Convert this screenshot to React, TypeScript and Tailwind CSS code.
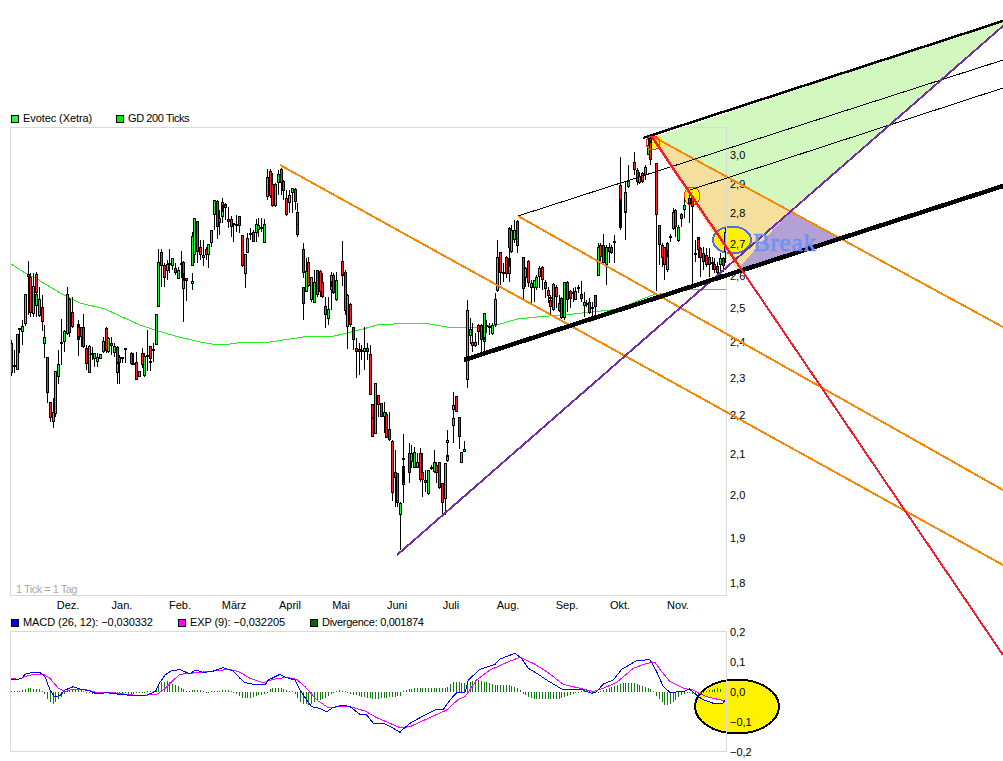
const GREEN = "#22ee33";
const RED = "#ff2222";

type Row = [number, number, number, number?, number?, number?];

// candle rows: x, body top, body bottom, wick top, wick bottom, green (1) or red (0)
// measured on 3x crops, each block has its own crop origin
const blockA: Row[] = [
  [34,310,400,300,407,0],[41,375,380,330,400,0],[49,283,390,283,390,1],[58,263,268,263,340,0],[67,258,275,240,315,1],[73,163,253,163,258,1],
  [82,102,112,63,225,0],[89,110,220,100,232,0],[97,138,222,100,232,1],[106,103,160,95,200,0],[112,162,197,160,230,1],[120,178,227,140,230,1],
  [127,202,247,165,272,0],[136,290,313,255,355,1],[142,352,458,352,490,0],[151,485,535,485,545,0],[159,515,547,475,563,1],[166,392,523,392,530,1],
  [175,373,412,330,432,1],[182,305,310,237,375,1],[190,272,305,270,335,1],[199,163,283,140,285,1],[205,178,278,175,290,0],[213,215,232,198,265,1],
  [220,215,260,170,265,0],[229,253,300,253,347,0],[237,262,292,240,318,0],[245,262,292,262,320,0],[253,262,322,222,325,0],[261,325,373,315,390,0],
  [269,317,400,315,400,1],[276,340,345,320,360,0],[283,340,358,340,380,1],[292,350,367,340,380,1],[298,343,358,343,358,1],[306,303,337,290,340,1],
  [313,265,333,262,340,0],[322,295,335,290,340,1],[331,310,317,290,345,0],[338,317,340,310,350,1],[346,320,387,318,390,0],[353,368,398,365,433,1],
  [361,350,370,345,433,0],[368,350,358,350,370,1],[377,325,331,325,370,0],[390,338,372,335,375,0],[398,370,373,340,375,0],[406,367,421,335,421,0],
  [414,393,412,393,412,1],[423,340,375,323,385,0],[431,347,409,340,412,1],[439,345,347,270,392,0],[447,362,365,345,392,0],[454,317,358,317,362,0],
  [461,328,333,310,365,0],[469,223,316,223,316,1],
];
const blockB: Row[] = [
  [477,487,622,448,622,1],[483,457,498,448,560,0],[492,495,535,490,562,0],[499,492,512,480,540,1],[508,490,495,448,520,1],[516,475,498,475,510,1],
  [523,505,520,490,525,0],[531,510,538,500,538,1],[539,488,490,453,535,1],[547,485,558,483,667,0],[554,540,568,520,598,1],[562,535,542,535,602,0],
  [571,543,553,520,570,1],[578,408,497,395,497,1],[586,355,465,355,490,1],[593,363,455,363,490,0],[601,440,465,420,480,0],[609,465,475,420,497,1],
  [616,447,465,440,480,0],[625,432,465,432,505,1],[632,390,428,390,440,1],[640,300,345,300,390,1],[647,303,380,300,418,0],[655,353,370,330,405,0],
  [664,315,350,295,370,1],[670,305,318,295,335,0],[679,312,325,310,360,0],[686,358,365,320,385,0],[695,358,380,348,412,0],[703,370,376,370,425,0],
  [711,372,376,345,395,0],[718,347,377,347,400,0],[725,405,497,405,500,0],[733,462,523,462,563,1],[742,415,458,400,458,1],[748,400,405,385,420,0],
  [757,395,425,390,425,0],[763,373,400,358,425,1],[772,375,390,355,410,1],[780,380,384,355,395,0],[788,390,406,375,410,0],[796,372,430,357,430,1],
  [802,230,292,208,300,1],[811,212,288,208,295,0],[818,252,318,220,320,0],[826,252,318,250,320,1],[835,223,250,210,285,1],[841,208,250,205,285,0],
  [850,242,272,240,300,0],[857,295,344,270,347,0],[864,285,310,270,340,1],[872,265,280,265,340,1],[880,267,305,265,330,0],[889,337,388,310,390,0],
  [896,373,406,373,410,0],[905,447,520,430,535,0],[912,560,612,560,660,0],[920,512,575,475,575,1],[928,485,558,470,560,0],[936,530,600,530,605,1],
  [944,545,610,510,610,1],[951,510,585,510,590,0],[960,513,575,510,590,0],[966,545,590,520,595,0],[974,618,645,590,685,0],[982,628,658,592,675,1],[988,530,570,515,630,1],
];
const blockC: Row[] = [
  [3,165,185,155,200,1],[13,165,218,160,222,0],[22,180,240,155,242,1],[32,128,168,63,197,0],[38,123,165,115,170,0],[46,155,272,150,285,0],
  [53,225,322,222,388,1],[62,253,315,250,320,0],[68,322,360,322,390,0],[76,385,397,355,475,0],[85,388,397,370,465,0],[92,390,396,375,420,1],
  [100,385,397,322,450,1],[107,385,395,370,420,0],[115,403,525,375,525,0],[125,553,595,553,615,0],[130,595,650,590,650,0],[139,488,642,488,642,1],
  [145,525,555,525,590,0],[155,550,590,548,592,0],[161,575,590,545,640,1],[169,583,655,575,655,0],[177,628,660,575,662,0],[184,662,818,660,842,0],
  [193,757,775,690,860,0],[200,760,850,758,862,0],[208,848,885,845,990,1],[217,738,795,718,850,1],[223,715,720,642,790,0],[232,702,706,670,745,1],
  [237,700,760,680,790,0],[247,700,727,675,745,1],[255,695,745,680,745,1],[263,725,745,700,745,1],[270,700,780,685,785,0],[278,755,780,700,830,0],
  [286,780,790,750,815,0],[292,750,822,750,825,1],[302,742,746,735,750,1],[311,725,757,690,760,1],[317,735,760,725,790,0],[326,725,805,725,808,0],
  [332,790,848,790,885,0],[340,730,838,730,885,1],[349,706,723,680,725,1],[353,660,670,630,710,1],[365,595,617,565,670,1],[371,555,570,515,575,1],
  [380,527,575,527,575,0],[386,592,652,592,688,0],[394,697,730,697,730,1],[403,688,696,662,696,1],[409,270,480,240,503,1],[419,328,347,295,372,1],
  [425,365,378,310,395,0],[433,365,378,340,380,1],[443,315,337,312,375,0],[449,315,360,312,395,0],[457,345,365,345,395,1],[464,280,355,278,360,1],
  [472,315,318,300,340,1],[480,318,322,310,345,0],[488,315,342,310,345,1],[497,238,315,220,320,1],[503,110,212,60,215,1],[511,95,160,95,195,0],
  [519,155,162,130,185,1],[527,110,162,108,175,0],[535,115,162,70,185,1],[540,25,85,20,140,0],[548,30,97,15,100,1],[556,30,60,0,70,1],
  [565,3,78,0,100,0],[575,110,207,110,240,0],[583,145,175,140,200,1],[595,122,190,120,200,0],[605,190,205,180,250,1],[612,180,205,180,247,1],
  [620,170,203,165,210,1],[630,145,170,138,205,1],[634,140,180,138,210,0],[643,185,207,180,235,0],[649,210,228,200,250,0],[658,232,238,225,260,0],
  [665,240,260,235,285,0],[673,193,270,190,272,1],[680,200,232,195,265,0],[688,250,272,225,275,0],[695,235,295,232,298,0],[703,187,295,187,300,1],
  [712,185,240,183,275,0],[720,212,238,210,265,0],[726,215,220,205,245,1],[737,212,240,200,240,1],[744,200,206,195,220,0],[751,222,237,183,245,0],
  [760,245,258,215,290,1],[766,250,255,240,260,0],[778,245,280,235,282,0],[790,260,264,245,290,0],[796,225,262,225,290,0],
];
const blockD: Row[] = [
  [25,350,437,340,437,1],[33,345,380,340,400,0],[40,345,400,312,405,0],[50,350,405,345,465,1],[58,350,365,340,400,0],[65,350,370,345,372,0],
  [73,333,340,315,400,1],[88,168,295,80,295,1],[93,165,210,160,300,0],[103,190,250,175,330,1],[109,185,245,155,330,1],[118,152,172,105,175,1],
  [128,95,120,65,135,0],[143,120,155,115,165,0],[148,138,160,125,162,1],[158,130,155,125,160,0],[166,110,135,105,150,1],[173,45,75,25,75,1],
  [178,25,40,20,50,0],[185,35,90,30,105,0],[195,100,255,100,482,0],[206,285,345,285,405,0],[212,345,385,340,410,0],[220,350,405,350,450,0],
  [228,350,420,345,425,1],[235,338,362,335,380,0],[241,318,320,312,335,1],[250,245,298,235,300,1],[258,240,290,238,320,0],[266,292,332,285,335,1],
  [273,253,268,250,290,0],[281,225,240,205,265,1],[296,203,222,195,280,0],[303,204,230,204,465,0],[313,370,374,330,395,1],[319,322,350,320,380,1],
  [327,328,360,325,385,0],[335,355,385,350,440,0],[343,370,395,350,420,0],[350,375,405,355,410,0],[358,380,405,355,440,0],[365,395,402,380,420,1],
  [372,402,420,385,430,0],[380,408,428,395,440,0],[390,385,405,370,435,1],[398,385,408,380,425,0],[405,305,365,295,400,1],
];

// one candle per trading day, 2.78px apart
const snap = (x: number) => Math.round(11 + Math.round((x - 11) / 2.78) * 2.78);

const place = (rows: Row[], ox: number, oy: number) =>
  rows.map(([x, t, b, wt = t, wb = b, g = 1]) => ({
    x: snap(ox + x / 3),
    t: Math.round(oy + t / 3),
    b: Math.round(oy + b / 3),
    wt: Math.round(oy + wt / 3),
    wb: Math.round(oy + wb / 3),
    fill: g ? GREEN : RED,
  }));

const candles = [
  ...place(blockA, 0, 240),
  ...place(blockB, 0, 100),
  ...place(blockC, 330, 220),
  ...place(blockD, 590, 130),
];

const gd200 = "11,264 25,273 37,279 60,293 80,303 105,309 120,316 140,325 155,330 175,336 200,342 218,345 230,344 245,342 270,342 290,339 310,336 330,337 347,333 363,329 377,325 393,324 423,323 447,327 463,328 480,327 497,325 517,319 537,317 573,314 620,309 637,301 653,295 693,289 726,289";

const crop = (pts: number[][], ox: number, oy: number) =>
  pts.map(([x, y]) => `${ox + x / 3},${oy + y / 3}`).join(" ");

const macdA = [[33,313],[50,314],[65,310],[75,298],[95,293],[120,293],[135,305],[150,345],[163,365],[180,362],[195,345],[220,335],[240,342],[270,348],[290,357],[320,353],[360,358],[400,362],[440,360],[465,350],[480,322],[495,300],[515,287],[540,284],[570,297],[585,285],[610,292],[635,290],[670,278],[700,288],[720,310],[735,323],[760,328],[795,330],[805,315],[840,298],[860,308],[885,315],[900,345],[920,375],[935,395],[960,400],[980,410],[1000,397],[1030,390],[1050,395],[1080,418],[1100,420],[1122,447],[1150,445],[1180,460],[1200,472]];
const macdB = [[0,470],[30,445],[60,428],[105,405],[130,403],[150,375],[170,353],[195,352],[205,315],[240,283],[285,268],[300,252],[345,235],[365,250],[385,280],[410,295],[440,315],[485,342],[540,342],[575,355],[590,350],[610,327],[640,315],[665,283],[710,257],[750,254],[770,290],[790,335],[810,352],[850,350],[868,342],[890,360],[905,372],[940,385],[968,385],[975,375]];
const expA = [[33,310],[55,313],[75,305],[100,298],[130,298],[150,310],[175,340],[195,350],[220,342],[260,345],[290,352],[340,353],[380,358],[420,362],[470,358],[490,345],[515,320],[540,298],[570,295],[600,292],[650,287],[690,283],[720,292],[750,310],[790,323],[820,313],[860,307],[890,313],[915,335],[950,375],[985,398],[1020,395],[1050,395],[1095,408],[1130,428],[1170,445],[1200,458]];
const expB = [[0,458],[30,455],[80,432],[140,405],[175,373],[195,365],[230,315],[270,285],[330,258],[360,247],[400,265],[440,290],[490,328],[540,340],[580,350],[610,340],[650,322],[700,280],[740,265],[765,262],[785,290],[810,320],[850,340],[880,345],[920,365],[975,378]];

// divergence envelope: crop x (second crop shifted by 1200), height above the zero line
const envelope = [[33,2],[60,3],[85,12],[120,8],[130,0],[140,-20],[160,-38],[175,-20],[190,-8],[200,5],[230,10],[250,3],[270,-5],[300,-3],[400,-5],[460,3],[480,30],[500,32],[530,20],[560,3],[590,8],[620,-2],[680,7],[700,-2],[730,-20],[760,-15],[800,-3],[810,10],[840,13],[880,-1],[905,-35],[925,-38],[945,-30],[970,-20],[990,-8],[1020,6],[1060,-8],[1120,-22],[1200,-12],[1210,3],[1240,12],[1340,12],[1355,28],[1370,32],[1395,25],[1430,38],[1480,22],[1530,20],[1555,12],[1565,-5],[1600,-22],[1680,-20],[1720,-5],[1760,5],[1785,-3],[1820,10],[1870,28],[1910,25],[1950,8],[1960,4],[1970,-15],[1995,-42],[2010,-35],[2040,-12],[2060,0],[2090,-10],[2110,0],[2150,12],[2180,6]];

const amplitude = (x: number) => {
  for (let i = 1; i < envelope.length; i++) {
    const [x0, a0] = envelope[i - 1];
    const [x1, a1] = envelope[i];
    if (x <= x1) return a0 + ((a1 - a0) * (x - x0)) / (x1 - x0);
  }
  return 0;
};

const bars = Array.from({ length: 256 }, (_, i) => {
  const x = 11 + i * 2.78;
  const a = amplitude(x * 3) / 3;
  return { x: Math.round(x), h: Math.max(1, Math.round(Math.abs(a))), up: a > 0 };
});

const priceTicks = [
  ["3,0", 155], ["2,9", 184], ["2,8", 213], ["2,7", 244], ["2,6", 276], ["2,5", 308], ["2,4", 342],
  ["2,3", 378], ["2,2", 415], ["2,1", 454], ["2,0", 495], ["1,9", 538], ["1,8", 583],
] as const;

const macdTicks = [["0,2", 632], ["0,1", 662], ["0,0", 692], ["−0,1", 722], ["−0,2", 752]] as const;

const months = [
  ["Dez.", 68], ["Jan.", 122], ["Feb.", 180], ["März", 234], ["April", 290], ["Mai", 341],
  ["Juni", 397], ["Juli", 451], ["Aug.", 508], ["Sep.", 567], ["Okt.", 620], ["Nov.", 678],
] as const;

function Swatch({ className }: { className: string }) {
  return <span className={`h-[8px] w-[8px] shrink-0 border border-black ${className}`} />;
}

function YAxis({ ticks, top }: { ticks: readonly (readonly [string, number])[]; top: number }) {
  let cursor = top;
  return (
    <div className="flex w-[40px] flex-col pl-[3px]">
      {ticks.map(([label, y]) => {
        const gap = y - 6 - cursor;
        cursor = y + 6;
        return (
          <div key={label} className="h-[12px] leading-[12px]" style={{ marginTop: gap }}>
            {label}
          </div>
        );
      })}
    </div>
  );
}

function PriceChart() {
  return (
    <svg width={715} height={467} viewBox="11 128 715 467" shapeRendering="crispEdges" className="block">
      <polyline points={gd200} fill="none" stroke="#22ee22" strokeWidth={1} />
      {candles.map((c, i) => (
        <g key={i}>
          <rect x={c.x} y={c.wt} width={1} height={Math.max(1, c.wb - c.wt)} fill="#000" />
          <rect x={c.x - 1} y={c.t} width={3} height={Math.max(2, c.b - c.t)} fill="#000" />
          {c.b - c.t > 2 && <rect x={c.x} y={c.t + 1} width={1} height={c.b - c.t - 2} fill={c.fill} />}
        </g>
      ))}
    </svg>
  );
}

function MacdChart() {
  const blue = `${crop(macdA, 0, 575)} ${crop(macdB, 400, 575)}`;
  const pink = `${crop(expA, 0, 575)} ${crop(expB, 400, 575)}`;
  return (
    <svg width={715} height={119} viewBox="11 632 715 119" shapeRendering="crispEdges" className="block">
      <polygon points={crop([[905,372],[940,385],[968,385],[975,378],[920,365]], 400, 575)} fill="#fff" />
      {bars.map((b, i) => (
        <rect key={i} x={b.x} y={b.up ? 692 - b.h : 692} width={1} height={b.h} fill="#0a7d0a" />
      ))}
      <polyline points={pink} fill="none" stroke="#ff00ff" strokeWidth={1} />
      <polyline points={blue} fill="none" stroke="#0000ff" strokeWidth={1} />
    </svg>
  );
}

export default function App() {
  return (
    <div className="relative h-[761px] w-[1003px] overflow-hidden bg-white font-['Liberation_Sans',Arial,sans-serif] text-[11px] text-black">
      {/* fills painted under the chart */}
      <svg width={1003} height={761} shapeRendering="crispEdges" className="absolute inset-0 z-0">
        <polygon points="655,137 1003,21 1003,26 790,211" fill="#d2f8c0" />
        <polygon points="652,137 790,211 737,270" fill="#f5df9d" />
        <polygon points="790,211 838,238 737,270" fill="#b3a0d4" />
        <circle cx={656} cy={142} r={7} fill="#fff200" />
        <ellipse cx={692} cy={196} rx={8} ry={9} fill="#fff200" stroke="#ff3030" />
        <ellipse cx={732} cy={240} rx={19} ry={13.5} fill="#fff200" stroke="#4a73dd" strokeWidth={2} />
        <ellipse cx={737} cy={706.5} rx={42} ry={27} fill="#fff200" stroke="#000" strokeWidth={2} />
      </svg>

      <div className="relative z-10 flex flex-col pl-[10px] pt-[110px]">
        <div className="flex h-[17px] items-center pl-[1px]">
          <Swatch className="bg-[#33ee44]" />
          <span className="ml-[4px] w-[93px] tracking-[-0.08px]">Evotec (Xetra)</span>
          <Swatch className="bg-[#00ee00]" />
          <span className="ml-[4px] tracking-[-0.4px]">GD 200 Ticks</span>
        </div>

        <div className="flex items-start">
          <div className="relative border border-[#d9d9d9]">
            <PriceChart />
            <span className="absolute bottom-0 left-[5px] leading-[12px] tracking-[-0.5px] text-[#aaaaaa]">1 Tick = 1 Tag</span>
          </div>
          <YAxis ticks={priceTicks} top={127} />
        </div>

        <div className="relative h-[18px] w-[717px]">
          {months.map(([label, x]) => (
            <span key={label} className="absolute top-[3px] -translate-x-1/2 leading-[12px]" style={{ left: x - 10 }}>
              {label}
            </span>
          ))}
        </div>

        <div className="flex h-[17px] items-center pl-[1px]">
          <Swatch className="bg-[#0000ff]" />
          <span className="ml-[4px] w-[155px] tracking-[-0.08px]">MACD (26, 12): −0,030332</span>
          <Swatch className="bg-[#ff00ff]" />
          <span className="ml-[4px] w-[120px] tracking-[-0.1px]">EXP (9): −0,032205</span>
          <Swatch className="bg-[#006600]" />
          <span className="ml-[4px] tracking-[-0.3px]">Divergence: 0,001874</span>
        </div>

        <div className="flex items-start">
          <div className="border border-[#d9d9d9]">
            <MacdChart />
          </div>
          <YAxis ticks={macdTicks} top={631} />
        </div>
      </div>

      {/* trend lines drawn by hand over the chart */}
      <svg width={1003} height={761} shapeRendering="crispEdges" className="pointer-events-none absolute inset-0 z-20">
        <line x1={280} y1={165} x2={1003} y2={565} stroke="#f58a0a" strokeWidth={2} />
        <line x1={518} y1={216} x2={1003} y2={490} stroke="#f58a0a" strokeWidth={2} />
        <line x1={650} y1={135} x2={1003} y2={327} stroke="#f58a0a" strokeWidth={2} />
        <line x1={518} y1={216} x2={1003} y2={60} stroke="#000" strokeWidth={1} />
        <line x1={690} y1={190} x2={1003} y2={88} stroke="#000" strokeWidth={1} />
        <line x1={397} y1={555} x2={1003} y2={26} stroke="#7030a0" strokeWidth={2} />
        <line x1={643} y1={138} x2={1003} y2={21} stroke="#000" strokeWidth={2.5} />
        <line x1={464} y1={360} x2={1003} y2={186} stroke="#000" strokeWidth={4.5} />
        <line x1={652} y1={137} x2={737} y2={263} stroke="#ee2030" strokeWidth={2.5} />
        <line x1={737} y1={263} x2={1003} y2={655} stroke="#ee2030" strokeWidth={2} />
        <ellipse cx={653} cy={143} rx={7} ry={7} fill="none" stroke="#ff3030" />
      </svg>

      <span className="absolute left-[753px] top-[229px] z-30 font-['Liberation_Serif',serif] text-[25px] leading-[28px] tracking-[0.8px] text-[#6c93f5] [-webkit-text-stroke:0.6px_#6c93f5]">
        Break
      </span>
    </div>
  );
}
